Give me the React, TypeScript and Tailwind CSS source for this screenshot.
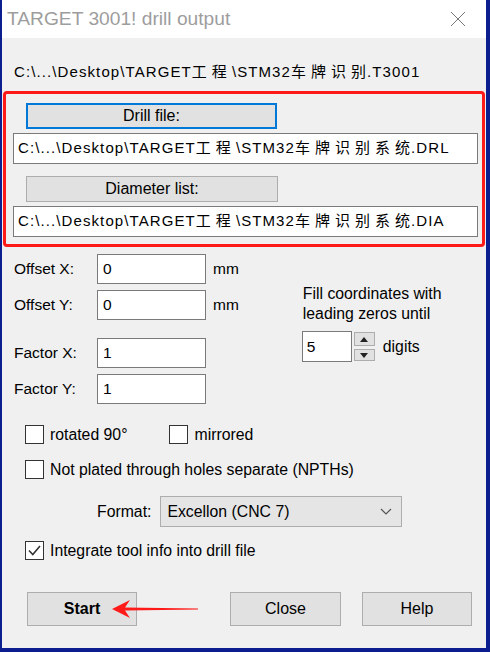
import React from 'react';

const font = { fontFamily: '"Liberation Sans", "Noto Sans CJK SC", sans-serif' };

// Windows renders these paths with a wide CJK advance, so the CJK runs get extra tracking
const Path: React.FC<{ name: string; ext: string }> = ({ name, ext }) => (
  <span className="tracking-[1.1px] whitespace-nowrap">
    C:\...\Desktop\TARGET<span className="tracking-[5px]">工程</span>\STM32
    <span className="tracking-[5px]">{name.slice(0, -1)}</span>
    <span className="tracking-[1px]">{name.slice(-1)}</span>.{ext}
  </span>
);

const Check: React.FC<{ checked?: boolean; label: string; className?: string }> = ({ checked, label, className }) => (
  <div className={`flex items-center ${className ?? ''}`}>
    <div className="w-[19px] h-[19px] border border-[#333] bg-white flex items-center justify-center">
      {checked && (
        <svg width="15" height="15" viewBox="0 0 15 15">
          <path d="M2 7.5 L5.8 11.5 L13 3" fill="none" stroke="#333" strokeWidth="1.6" />
        </svg>
      )}
    </div>
    <span className="ml-[6px] text-[15.8px] leading-none">{label}</span>
  </div>
);

const Field: React.FC<{ label: string; value: string; unit?: string; className?: string }> = ({ label, value, unit, className }) => (
  <div className={`flex items-center h-[30px] ${className ?? ''}`}>
    <span className="w-[83px] text-[15.5px]">{label}</span>
    <div className="w-[109px] h-[30px] border border-[#7a7a7a] bg-white flex items-center pl-[5px] text-[15.5px]">{value}</div>
    {unit && <span className="ml-[7px] text-[15.5px]">{unit}</span>}
  </div>
);

export default function App() {
  return (
    <div className="w-[490px] h-[652px] bg-[#0c1d8f] relative overflow-hidden text-black" style={font}>
      <div className="ml-[2px] w-[484px] h-[648px] flex flex-col">
        {/* title bar */}
        <div className="h-[38px] bg-white flex items-center justify-between pl-[5px] pr-[20px]">
          <span className="text-[19.2px] text-[#9d9d9d]">TARGET 3001! drill output</span>
          <svg width="16" height="16" viewBox="0 0 16 16">
            <path d="M1 1 L15 15 M15 1 L1 15" stroke="#777" strokeWidth="1" />
          </svg>
        </div>

        <div className="flex-1 bg-[#f0f0f0] relative">
          <div className="pl-[12px] pt-[25px] text-[15px] leading-[18px]">
            <Path name="车牌识别" ext="T3001" />
          </div>

          {/* highlighted file section */}
          <div className="ml-[1px] mt-[10px] w-[482px] h-[156px] border-[3px] border-[#ff1a1a] rounded-[4px] pt-[9px]">
            <div className="ml-[20px] w-[251px] h-[26px] bg-[#e1e1e1] border-2 border-[#0078d7] flex items-center justify-center text-[16px]">Drill file:</div>
            <div className="ml-[7px] mt-[4px] w-[465px] h-[31px] bg-white border border-[#7a7a7a] flex items-center pl-[4px] text-[15px]">
              <Path name="车牌识别系统" ext="DRL" />
            </div>
            <div className="ml-[20px] mt-[12px] w-[252px] h-[26px] bg-[#e1e1e1] border border-[#adadad] flex items-center justify-center text-[16px]">Diameter list:</div>
            <div className="ml-[7px] mt-[4px] w-[465px] h-[31px] bg-white border border-[#7a7a7a] flex items-center pl-[4px] text-[15px]">
              <Path name="车牌识别系统" ext="DIA" />
            </div>
          </div>

          {/* offsets / factors + leading zeros */}
          <div className="flex mt-[7px]">
            <div className="pl-[12px]">
              <Field label="Offset X:" value="0" unit="mm" />
              <Field label="Offset Y:" value="0" unit="mm" className="mt-[6px]" />
              <Field label="Factor X:" value="1" className="mt-[18px]" />
              <Field label="Factor Y:" value="1" className="mt-[6px]" />
            </div>
            <div className="ml-[64px] pt-[30px]">
              <div className="text-[15.8px] leading-[20px]">Fill coordinates with<br />leading zeros until</div>
              <div className="flex items-center mt-[7px] -ml-[1px]">
                <div className="w-[50px] h-[31px] bg-white border border-[#7a7a7a] flex items-center pl-[4px] text-[15.5px]">5</div>
                <div className="ml-[2px] flex flex-col gap-[3px]">
                  <div className="w-[21px] h-[14px] bg-[#e1e1e1] border border-[#adadad] flex items-center justify-center">
                    <svg width="8" height="5" viewBox="0 0 8 5"><path d="M0 5 L4 0 L8 5 Z" fill="#222" /></svg>
                  </div>
                  <div className="w-[21px] h-[12px] bg-[#e1e1e1] border border-[#adadad] flex items-center justify-center">
                    <svg width="8" height="5" viewBox="0 0 8 5"><path d="M0 0 L4 5 L8 0 Z" fill="#222" /></svg>
                  </div>
                </div>
                <span className="ml-[8px] text-[15.8px]">digits</span>
              </div>
            </div>
          </div>

          {/* options */}
          <div className="pl-[23px] mt-[21px]">
            <div className="flex">
              <Check label="rotated 90°" />
              <Check label="mirrored" className="ml-[42px]" />
            </div>
            <Check label="Not plated through holes separate (NPTHs)" className="mt-[16px]" />
          </div>

          <div className="flex items-center mt-[17px] pl-[95px]">
            <span className="text-[15.8px]">Format:</span>
            <div className="ml-[9px] w-[242px] h-[31px] bg-[#e5e5e5] border border-[#adadad] flex items-center justify-between pl-[6px] pr-[9px] text-[15.8px]">
              <span>Excellon (CNC 7)</span>
              <svg width="12" height="7" viewBox="0 0 12 7"><path d="M1 1 L6 6 L11 1" fill="none" stroke="#555" strokeWidth="1.2" /></svg>
            </div>
          </div>

          <Check checked label="Integrate tool info into drill file" className="ml-[23px] mt-[14px]" />

          {/* buttons */}
          <div className="relative flex mt-[32px] pl-[25px]">
            <div className="w-[110px] h-[34px] bg-[#e1e1e1] border border-[#adadad] flex items-center justify-center text-[16px] font-bold">Start</div>
            <div className="ml-[93px] w-[111px] h-[34px] bg-[#e1e1e1] border border-[#adadad] flex items-center justify-center text-[16px]">Close</div>
            <div className="ml-[21px] w-[110px] h-[34px] bg-[#e1e1e1] border border-[#adadad] flex items-center justify-center text-[16px]">Help</div>
            <svg className="absolute left-[108px] top-[7px]" width="90" height="20" viewBox="0 0 90 20">
              <path d="M2 10 L20 1 L15 8.5 L88 9.6 L88 10.4 L15 11.5 L20 19 Z" fill="#ff1a1a" />
            </svg>
          </div>
        </div>
      </div>
    </div>
  );
}
